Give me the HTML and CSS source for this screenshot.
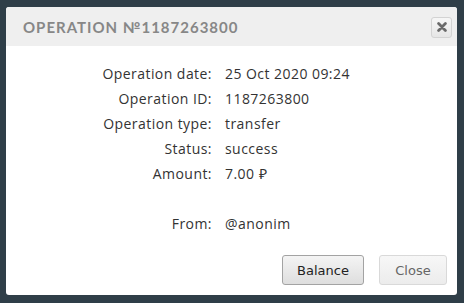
FILE: index.html
```html
<!DOCTYPE html>
<html lang="en">
<head>
    <meta charset="UTF-8">
    <title>Operation</title>
    <link rel="stylesheet" href="styles.css">
</head>
<body>
    <div class="dialog">
        <div class="dialog-title">
            <span class="title-text">Operation №1187263800</span>
            <button class="close-x" title="Close">
                <svg width="10" height="10" viewBox="0 0 10 10"><path d="M1.6 1.6 L8.4 8.4 M8.4 1.6 L1.6 8.4" stroke="#6a6a6a" stroke-width="2.8" stroke-linecap="round"/></svg>
            </button>
        </div>
        <div class="dialog-body">
            <div class="info">
                <span class="label">Operation date:</span><span class="value">25 Oct 2020 09:24</span>
                <span class="label">Operation ID:</span><span class="value">1187263800</span>
                <span class="label">Operation type:</span><span class="value">transfer</span>
                <span class="label">Status:</span><span class="value">success</span>
                <span class="label">Amount:</span><span class="value">7.00 ₽</span>
                <span class="label spacer"></span><span class="value spacer"></span>
                <span class="label">From:</span><span class="value">@anonim</span>
            </div>
        </div>
        <div class="dialog-buttons">
            <button class="btn btn-main">Balance</button>
            <button class="btn btn-light">Close</button>
        </div>
    </div>
</body>
</html>
```

FILE: styles.css
```css
body {
    margin: 0;
    padding: 7px 7px 0 6px;
    background-color: #2f3e48;
    font-family: "Open Sans", sans-serif;
}
.dialog {
    width: 451px;
    height: 288px;
    background-color: #fff;
    border-radius: 3px;
    display: flex;
    flex-direction: column;
    overflow: hidden;
}
.dialog-title {
    height: 39px;
    background-color: #efefef;
    display: flex;
    align-items: center;
    justify-content: space-between;
    padding: 0 5px 0 17px;
}
.title-text {
    font-family: "Lato", sans-serif;
    font-size: 15px;
    font-weight: 700;
    text-transform: uppercase;
    letter-spacing: 1px;
    color: #878787;
}
.close-x {
    width: 21px;
    height: 21px;
    padding: 0;
    margin-top: 1px;
    border: 1px solid #d3d3d3;
    border-radius: 3px;
    background: linear-gradient(#f6f6f6, #e6e6e6);
    display: flex;
    align-items: center;
    justify-content: center;
}
.dialog-body {
    flex: 1;
    padding-top: 15px;
}
.info {
    display: grid;
    grid-template-columns: 206px 1fr;
    column-gap: 13px;
    font-size: 14px;
    letter-spacing: 0.45px;
    line-height: 25px;
    color: #333;
}
.label {
    text-align: right;
}
.spacer {
    height: 25px;
}
.dialog-buttons {
    display: flex;
    justify-content: flex-end;
    gap: 15px;
    padding: 0 10px 10px 0;
}
.btn {
    height: 30px;
    font-family: "DejaVu Sans", Verdana, sans-serif;
    font-size: 13px;
    border-radius: 3px;
    padding: 0 14px;
}
.btn-main {
    width: 82px;
    color: #222;
    border: 1px solid #a3a3a3;
    background: linear-gradient(#f4f4f4, #dedede);
}
.btn-light {
    width: 68px;
    color: #666;
    border: 1px solid #d9d9d9;
    background: linear-gradient(#f7f7f7, #ececec);
}
```
